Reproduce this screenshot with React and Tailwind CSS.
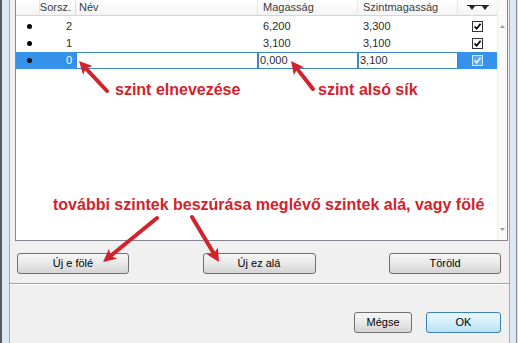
import React from "react";

const rows = [
  { n: "2", m: "6,200", s: "3,300" },
  { n: "1", m: "3,100", s: "3,100" },
];

function Check({ selected }) {
  return (
    <div
      className={
        selected
          ? "w-[11px] h-[11px] border border-[#d4e8fb] bg-[#5eaaf2] flex items-center justify-center"
          : "w-[11px] h-[11px] border border-[#333333] bg-white flex items-center justify-center"
      }
    >
      <svg width="9" height="9" viewBox="0 0 9 9">
        <path
          d="M1.5 4.5 L3.6 6.7 L7.6 1.8"
          fill="none"
          stroke={selected ? "#e4f0fd" : "#000"}
          strokeWidth="1.8"
        />
      </svg>
    </div>
  );
}

function Arrow({ x1, y1, x2, y2 }) {
  const dx = x2 - x1;
  const dy = y2 - y1;
  const len = Math.hypot(dx, dy);
  const ux = dx / len;
  const uy = dy / len;
  const L = 13;
  const W = 6.5;
  const bx = x2 - ux * L;
  const by = y2 - uy * L;
  const px = -uy;
  const py = ux;
  const pts = `${x2},${y2} ${bx + px * W},${by + py * W} ${bx + ux * 3},${by + uy * 3} ${bx - px * W},${by - py * W}`;
  return (
    <g>
      <line x1={x1} y1={y1} x2={bx + ux * 3} y2={by + uy * 3} stroke="#d2232c" strokeWidth="4" strokeLinecap="round" />
      <polygon points={pts} fill="#d2232c" />
    </g>
  );
}

function Btn({ children, w, primary }) {
  return (
    <button
      className={
        (primary
          ? "border-[#3c7fb1] bg-linear-to-b from-[#eaf6fd] via-[#d4eefb] to-[#b8e0f6] "
          : "border-[#707070] bg-linear-to-b from-[#f6f6f6] via-[#e9e9e9] to-[#d4d4d4] ") +
        "h-[21px] rounded-[3px] border text-[11px] text-black leading-none flex items-center justify-center " +
        w
      }
    >
      {children}
    </button>
  );
}

export default function App() {
  return (
    <div className="relative w-[518px] h-[343px] bg-[#f0f0f0] flex overflow-hidden font-['Liberation_Sans',Arial,sans-serif] text-[11px] text-black">
      {/* left frame */}
      <div className="flex shrink-0">
        <div className="w-[2px] bg-[#5a5a5a]" />
        <div className="w-[7px] bg-[#dce8f5]" />
        <div className="w-px bg-[#a7a7a7]" />
      </div>

      {/* main */}
      <div className="flex-1 flex flex-col">
        <div className="h-[283px] flex flex-col">
          {/* list box */}
          <div className="ml-[5px] w-[493px] h-[241px] bg-white border-x border-b border-[#828790] flex">
            <div className="w-[481px] flex flex-col">
              {/* header */}
              <div className="h-[16px] flex border-b border-[#d5d5d5] bg-linear-to-b from-white to-[#f4f4f4] text-[#3a3a3a]">
                <div className="w-[24px] border-r border-[#e6e6e6]" />
                <div className="w-[36px] flex items-center justify-end pr-[4px] border-r border-[#dcdcdc]">Sorsz.</div>
                <div className="w-[182px] flex items-center pl-[3px] border-r border-[#e6e6e6]">Név</div>
                <div className="w-[100px] flex items-center pl-[5px] border-r border-[#e6e6e6]">Magasság</div>
                <div className="w-[100px] flex items-center pl-[5px] border-r border-[#e6e6e6]">Szintmagasság</div>
                <div className="w-[39px] flex items-center justify-center">
                  <svg width="24" height="6" viewBox="0 0 24 6">
                    <line x1="1" y1="0.5" x2="23" y2="0.5" stroke="#222" strokeWidth="1" />
                    <polygon points="3,1 9,1 6,5" fill="#222" />
                    <polygon points="16,1 22,1 19,5" fill="#222" />
                  </svg>
                </div>
              </div>
              <div className="h-[2px]" />
              {rows.map((r) => (
                <div key={r.n} className="h-[17px] flex items-center text-[#2a2a2a]">
                  <div className="w-[24px] flex justify-center pl-[2px]">
                    <div className="w-[5px] h-[5px] rounded-full bg-black" />
                  </div>
                  <div className="w-[36px] text-right pr-[4px]">{r.n}</div>
                  <div className="w-[182px]" />
                  <div className="w-[100px] pl-[5px]">{r.m}</div>
                  <div className="w-[100px] pl-[5px]">{r.s}</div>
                  <div className="w-[39px] flex justify-center">
                    <Check />
                  </div>
                </div>
              ))}
              {/* selected row */}
              <div className="h-[17px] flex bg-[#3492ea]">
                <div className="w-[24px] flex items-center justify-center pl-[2px]">
                  <div className="w-[5px] h-[5px] rounded-full bg-[#111]" />
                </div>
                <div className="w-[36px] flex items-center justify-end pr-[4px] text-white">0</div>
                <div className="w-[182px] bg-white border border-[#3a86cf]" />
                <div className="w-[100px] bg-white border border-[#3a86cf] flex items-center pl-[1px] text-[#2a2a2a]">0,000</div>
                <div className="w-[100px] bg-white border border-[#3a86cf] flex items-center pl-[1px] text-[#2a2a2a]">3,100</div>
                <div className="w-[39px] flex items-center justify-center">
                  <Check selected />
                </div>
              </div>
            </div>
            {/* scrollbar */}
            <div className="flex-1 bg-[#f9f9f9] border-l border-[#efefef] flex flex-col items-center justify-between pt-[25px] pb-[9px]">
              <svg width="5" height="3" viewBox="0 0 5 3">
                <polygon points="0,3 5,3 2.5,0" fill="#9a9a9a" />
              </svg>
              <svg width="5" height="3" viewBox="0 0 5 3">
                <polygon points="0,0 5,0 2.5,3" fill="#9a9a9a" />
              </svg>
            </div>
          </div>

          {/* action buttons */}
          <div className="mt-[12px] flex justify-between pl-[7px] pr-[8px]">
            <Btn w="w-[112px]">Új e fölé</Btn>
            <Btn w="w-[113px]">Új ez alá</Btn>
            <Btn w="w-[112px]">Töröld</Btn>
          </div>
        </div>

        <div className="h-px bg-[#a0a0a0]" />
        <div className="h-px bg-white" />

        <div className="pt-[27px] pr-[8px] flex justify-end gap-[14px]">
          <Btn w="w-[58px]">Mégse</Btn>
          <Btn w="w-[75px]" primary>
            OK
          </Btn>
        </div>
      </div>

      {/* right frame */}
      <div className="flex shrink-0">
        <div className="w-px bg-[#a7a7a7]" />
        <div className="w-[6px] bg-[#dce8f5]" />
        <div className="w-px bg-[#8a8a8a]" />
        <div className="w-px bg-[#dce8f5]" />
      </div>

      {/* annotations */}
      <svg className="absolute inset-0 pointer-events-none" width="518" height="343">
        <Arrow x1={107} y1={91} x2={79} y2={61} />
        <Arrow x1={313} y1={89} x2={291} y2={61} />
        <Arrow x1={157} y1={218} x2={103} y2={262} />
        <Arrow x1={192} y1={217} x2={219} y2={262} />
      </svg>
      <div className="absolute left-[115px] top-[81px] text-[16px] leading-[18px] font-bold text-[#d2232c]">
        szint elnevezése
      </div>
      <div className="absolute left-[318px] top-[81px] text-[16px] leading-[18px] font-bold text-[#d2232c]">
        szint alsó sík
      </div>
      <div className="absolute left-[53px] top-[196px] text-[16px] leading-[18px] font-bold text-[#d2232c] whitespace-nowrap">
        további szintek beszúrása meglévő szintek alá, vagy fölé
      </div>
    </div>
  );
}
